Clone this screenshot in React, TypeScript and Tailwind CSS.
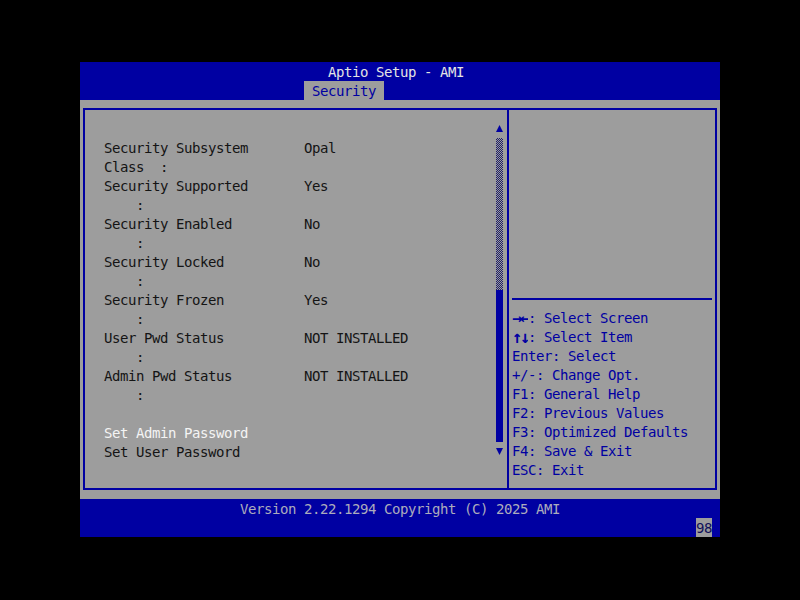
import React from 'react';

// 80x25 text screen, one cell = 8x19 px
const settings: [string, string][] = [
  ['Security Subsystem', 'Opal'],
  ['Class  :', ''],
  ['Security Supported', 'Yes'],
  ['    :', ''],
  ['Security Enabled', 'No'],
  ['    :', ''],
  ['Security Locked', 'No'],
  ['    :', ''],
  ['Security Frozen', 'Yes'],
  ['    :', ''],
  ['User Pwd Status', 'NOT INSTALLED'],
  ['    :', ''],
  ['Admin Pwd Status', 'NOT INSTALLED'],
  ['    :', ''],
];

const helpLines: [string, string][] = [
  ['→←', ': Select Screen'],
  ['↑↓', ': Select Item'],
  ['', 'Enter: Select'],
  ['', '+/-: Change Opt.'],
  ['', 'F1: General Help'],
  ['', 'F2: Previous Values'],
  ['', 'F3: Optimized Defaults'],
  ['', 'F4: Save & Exit'],
  ['', 'ESC: Exit'],
];

function ScrollBar() {
  return (
    <div className="w-[7px] mr-[4px] pt-[9px] flex flex-col">
      <div className="h-[19px] flex items-center justify-center">
        <svg width="7" height="7" viewBox="0 0 7 7">
          <polygon points="3.5,0 7,7 0,7" fill="#0000a2" />
        </svg>
      </div>
      <div className="h-[152px] bg-[conic-gradient(#1c1c6a_25%,transparent_0_50%,#1c1c6a_0_75%,transparent_0)] bg-[length:2px_2px]" />
      <div className="h-[152px] bg-[#0000a2]" />
      <div className="h-[19px] flex items-center justify-center">
        <svg width="7" height="7" viewBox="0 0 7 7">
          <polygon points="0,0 7,0 3.5,7" fill="#0000a2" />
        </svg>
      </div>
    </div>
  );
}

export default function App() {
  return (
    <div className="w-[800px] h-[600px] bg-black pt-[62px] pl-[80px] font-['DejaVu_Sans_Mono',monospace] text-[14px] leading-[19px] tracking-[-0.4287px]">
      <div className="w-[640px] flex flex-col">
        {/* Title + tab */}
        <div className="h-[38px] bg-[#0000a2] flex flex-col">
          <div className="h-[19px] pt-[1px] pl-[248px] text-[#e4e4e4] whitespace-pre">Aptio Setup - AMI</div>
          <div className="h-[19px] pt-[1px] ml-[224px] w-[80px] pl-[8px] bg-[#9d9d9d] text-[#0000a2]">Security</div>
        </div>

        {/* Body */}
        <div className="h-[399px] bg-[#9d9d9d] pt-[8px] px-[3px]">
          <div className="h-[382px] border-2 border-[#0000a2] flex">
            {/* Left panel */}
            <div className="w-[422px] flex">
              <div className="flex-1 pl-[19px] pt-[29px] flex flex-col">
                {settings.map(([label, value], i) => (
                  <div key={i} className="h-[19px] flex text-[#141414] whitespace-pre">
                    <span className="w-[200px]">{label}</span>
                    <span>{value}</span>
                  </div>
                ))}
                <div className="h-[19px]" />
                <div className="h-[19px] text-[#f4f4f4]">Set Admin Password</div>
                <div className="h-[19px] text-[#141414]">Set User Password</div>
              </div>
              <ScrollBar />
            </div>

            <div className="w-[2px] bg-[#0000a2]" />

            {/* Right help panel */}
            <div className="flex-1 flex flex-col">
              <div className="h-[188px]" />
              <div className="h-[2px] mx-[3px] bg-[#0000a2]" />
              <div className="pt-[9px] pl-[3px] flex flex-col text-[#0000a2]">
                {helpLines.map(([arrows, text], i) => (
                  <div key={i} className="h-[19px] flex whitespace-pre">
                    {arrows && (
                      <span className="w-[16px] h-[19px] overflow-hidden font-bold text-[17px] tracking-[-2.24px]">
                        {arrows}
                      </span>
                    )}
                    <span>{text}</span>
                  </div>
                ))}
              </div>
            </div>
          </div>
        </div>

        {/* Footer */}
        <div className="h-[38px] bg-[#0000a2] flex flex-col">
          <div className="h-[19px] pt-[1px] pl-[160px] text-[#acacbc] whitespace-pre">Version 2.22.1294 Copyright (C) 2025 AMI</div>
          <div className="h-[19px] pt-[1px] ml-[616px] w-[16px] bg-[#9d9d9d] text-[#10105a]">98</div>
        </div>
      </div>
    </div>
  );
}
